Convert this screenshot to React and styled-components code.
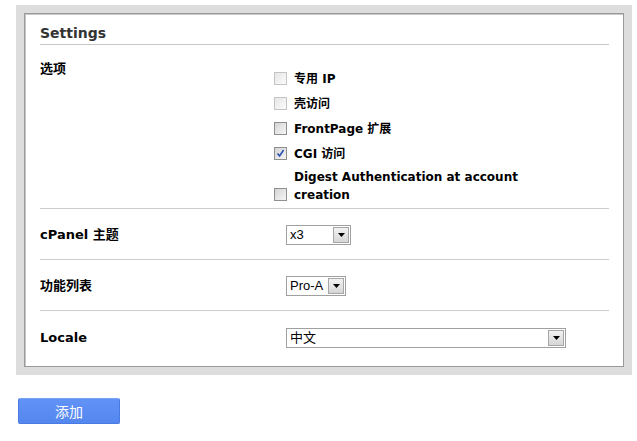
import React from "react";
import styled, { createGlobalStyle } from "styled-components";

const Global = createGlobalStyle`
  html, body { margin: 0; padding: 0; background: #fff; }
  body { font-family: "DejaVu Sans", Verdana, sans-serif; color: #000; }
`;

const Page = styled.div`
  padding: 5px 0 0 16px;
`;

const Frame = styled.div`
  width: 600px;
  background: #dcdddc;
  padding: 8px;
`;

const Panel = styled.div`
  background: #fff;
  border: 1px solid #999;
  box-shadow: inset 1px 1px 0 #c8c8c8;
  padding: 10px 14px 0 15px;
`;

const Heading = styled.h2`
  margin: 0;
  font-family: "DejaVu Sans", Verdana, sans-serif;
  font-size: 14px;
  font-weight: bold;
  line-height: 18px;
  color: #333;
  padding-bottom: 2px;
  border-bottom: 1px solid #c8c8c8;
`;

const Row = styled.div`
  display: grid;
  grid-template-columns: 234px 1fr;
  align-items: ${(p) => (p.$top ? "start" : "center")};
  padding: ${(p) => p.$pad};
  border-bottom: ${(p) => (p.$last ? "none" : "1px solid #cccccc")};
`;

const Label = styled.div`
  font-family: "DejaVu Sans", "Noto Sans CJK SC", sans-serif;
  font-size: 13px;
  font-weight: bold;
  line-height: 18px;
`;

const OptionList = styled.div`
  display: flex;
  flex-direction: column;
  gap: 7px;
  margin-top: 10px;
`;

const Option = styled.label`
  display: flex;
  align-items: flex-end;
  gap: 7px;
  margin-top: ${(p) => (p.$wrap ? "-2px" : "0")};
`;

const OptionText = styled.span`
  font-family: "DejaVu Sans", "Noto Sans CJK SC", sans-serif;
  font-size: 12px;
  font-weight: bold;
  line-height: 18px;
  max-width: 230px;
`;

const Box = styled.span`
  flex: none;
  width: 13px;
  height: 13px;
  box-sizing: border-box;
  margin-bottom: 3px;
  border: 1px solid ${(p) => (p.$disabled ? "#c4c4c4" : "#8e8f8f")};
  background: ${(p) =>
    p.$disabled
      ? "linear-gradient(135deg, #e6e6e6, #fbfbfb)"
      : "linear-gradient(135deg, #d4d4d4, #f6f6f6)"};
  display: flex;
  align-items: center;
  justify-content: center;
`;

const Control = styled.div`
  padding-left: 12px;
`;

const Select = styled.div`
  width: ${(p) => p.$w}px;
  height: 20px;
  box-sizing: border-box;
  border: 1px solid #a0a0a0;
  background: #fff;
  display: flex;
  align-items: center;
  padding: 1px;
`;

const SelectValue = styled.span`
  flex: 1;
  font-family: "Liberation Sans", "Noto Sans CJK SC", Arial, sans-serif;
  font-size: 13px;
  line-height: 16px;
  padding-left: 2px;
  white-space: nowrap;
  overflow: hidden;
`;

const Arrow = styled.span`
  flex: none;
  width: 16px;
  height: 16px;
  box-sizing: border-box;
  border: 1px solid;
  border-color: #f4f4f4 #8a8a8a #8a8a8a #f4f4f4;
  outline: 1px solid #a6a6a6;
  outline-offset: -1px;
  background: linear-gradient(#f2f2f2, #d6d6d6);
  display: flex;
  align-items: center;
  justify-content: center;
  margin: 0 0 0 1px;
`;

const AddButton = styled.button`
  margin: 23px 0 0 2px;
  width: 102px;
  height: 26px;
  box-sizing: border-box;
  border: 1px solid #4a7be0;
  border-top-color: #79a2f5;
  border-radius: 2px;
  background: linear-gradient(#6192f6, #5487ef);
  color: #fff;
  font-family: "Noto Sans CJK SC", sans-serif;
  font-size: 14px;
  line-height: 22px;
  padding: 0;
  cursor: pointer;
`;

function Checkbox({ checked, disabled }) {
  return (
    <Box $disabled={disabled}>
      {checked && (
        <svg width="9" height="9" viewBox="0 0 9 9">
          <path d="M1.5 4.5 L3.6 7 L7.6 1" fill="none" stroke="#2b4fb0" strokeWidth="1.6" />
        </svg>
      )}
    </Box>
  );
}

function Dropdown({ width, value }) {
  return (
    <Select $w={width}>
      <SelectValue>{value}</SelectValue>
      <Arrow>
        <svg width="7" height="4" viewBox="0 0 7 4">
          <path d="M0 0 H7 L3.5 4 Z" fill="#000" />
        </svg>
      </Arrow>
    </Select>
  );
}

const options = [
  { text: "专用 IP", disabled: true },
  { text: "壳访问", disabled: true },
  { text: "FrontPage 扩展" },
  { text: "CGI 访问", checked: true },
  { text: "Digest Authentication at account creation", wrap: true },
];

export default function App() {
  return (
    <>
      <Global />
      <Page>
        <Frame>
          <Panel>
            <Heading>Settings</Heading>
            <Row $top $pad="15px 0 4px">
              <Label>选项</Label>
              <OptionList>
                {options.map((o) => (
                  <Option key={o.text} $wrap={o.wrap}>
                    <Checkbox checked={o.checked} disabled={o.disabled} />
                    <OptionText>{o.text}</OptionText>
                  </Option>
                ))}
              </OptionList>
            </Row>
            <Row $pad="16px 0 14px">
              <Label>cPanel 主题</Label>
              <Control>
                <Dropdown width={65} value="x3" />
              </Control>
            </Row>
            <Row $pad="16px 0 14px">
              <Label>功能列表</Label>
              <Control>
                <Dropdown width={60} value="Pro-A" />
              </Control>
            </Row>
            <Row $last $pad="17px 0 18px">
              <Label>Locale</Label>
              <Control>
                <Dropdown width={280} value="中文" />
              </Control>
            </Row>
          </Panel>
        </Frame>
        <AddButton>添加</AddButton>
      </Page>
    </>
  );
}
